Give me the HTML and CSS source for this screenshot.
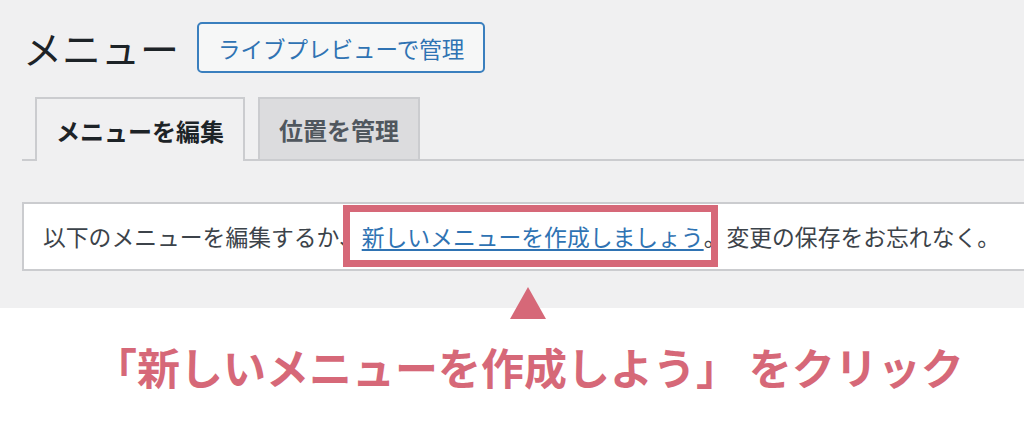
FILE: index.html
```html
<!DOCTYPE html>
<html lang="ja">
<head>
  <meta charset="UTF-8">
  <title>メニュー</title>
  <link rel="stylesheet" href="styles.css">
</head>
<body>

  <!-- admin screen -->
  <div class="admin">
    <div class="page-head">
      <h1>メニュー</h1>
      <a class="preview-btn" href="#">ライブプレビューで管理</a>
    </div>

    <div class="nav-tabs">
      <a class="tab active" href="#">メニューを編集</a>
      <a class="tab" href="#">位置を管理</a>
    </div>

    <div class="notice">
      以下のメニューを編集するか、<span class="hl"><a href="#">新しいメニューを作成しましょう</a></span>。変更の保存をお忘れなく。
    </div>
  </div>

  <!-- guide caption -->
  <div class="guide">
    <div class="pointer"></div>
    <p class="caption">「新しいメニューを作成しよう」 をクリック</p>
  </div>

</body>
</html>
```

FILE: styles.css
```css
body {
  margin: 0;
  font-family: "Noto Sans CJK JP", "Noto Sans", sans-serif;
  background: #fff;
  overflow: hidden;
}

.admin {
  background: #f0f0f1;
  height: 308px;
  box-sizing: border-box;
  padding: 22px 0 0 22px;
  overflow: hidden;
}

.page-head {
  display: flex;
  align-items: center;
  gap: 18px;
  padding-left: 1px;
  height: 51px;
}

h1 {
  margin: 0;
  font-size: 39px;
  font-weight: 400;
  line-height: 51px;
  color: #1d2327;
}

.preview-btn {
  display: flex;
  align-items: center;
  height: 51px;
  box-sizing: border-box;
  padding: 0 19px;
  border: 2px solid #3a7fbe;
  border-radius: 5px;
  background: #f6f7f7;
  color: #2f73b3;
  font-size: 22.5px;
  text-decoration: none;
}

.nav-tabs {
  display: flex;
  align-items: flex-end;
  gap: 13px;
  margin-top: 24px;
  padding-left: 13px;
  height: 62px;
  border-bottom: 2px solid #cbcccf;
}

.tab {
  display: flex;
  align-items: center;
  box-sizing: border-box;
  padding: 0 19px;
  font-size: 24px;
  font-weight: 700;
  text-decoration: none;
  border: 2px solid #cbcccf;
  border-bottom: none;
  background: #dcdcde;
  color: #50575e;
  height: 62px;
}

.tab.active {
  background: #f0f0f1;
  color: #1d2327;
  height: 64px;
  margin-bottom: -2px;
}

.notice {
  margin-top: 41px;
  margin-right: -10px;
  height: 69px;
  box-sizing: border-box;
  padding-left: 19px;
  display: flex;
  align-items: center;
  background: #fff;
  border: 2px solid #cbcccf;
  font-size: 22.8px;
  color: #3c434a;
  white-space: nowrap;
}

.notice a {
  color: #2f73b3;
  text-decoration: underline;
  text-underline-offset: 3px;
}

.hl {
  position: relative;
}

.hl::after {
  content: "";
  position: absolute;
  left: -19px;
  right: -14px;
  top: -15px;
  bottom: -14px;
  border: 7px solid #d66878;
}

.guide {
  position: relative;
}

.pointer {
  position: absolute;
  top: -21px;
  left: 510px;
  width: 0;
  height: 0;
  border-left: 18.5px solid transparent;
  border-right: 18.5px solid transparent;
  border-bottom: 32px solid #d66878;
}

.caption {
  margin: 0;
  padding: 30px 0 0 94px;
  font-size: 43px;
  font-weight: 700;
  line-height: 56px;
  color: #d66878;
  white-space: nowrap;
}
```
